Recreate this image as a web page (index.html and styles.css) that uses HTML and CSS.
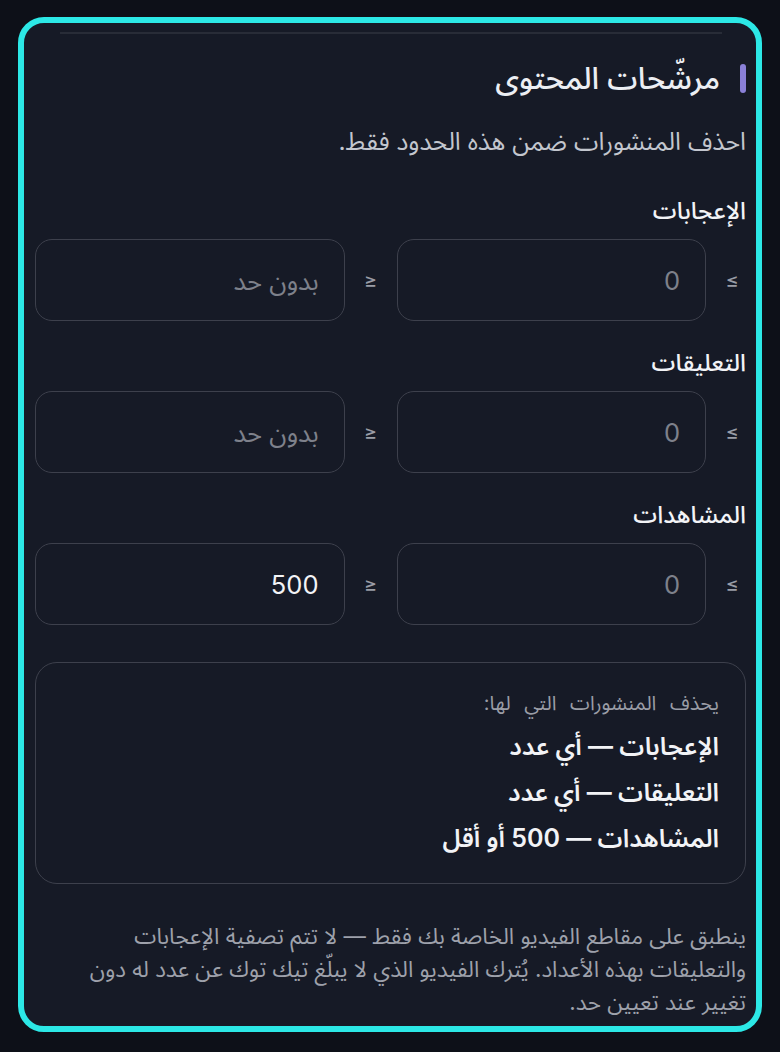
FILE: index.html
```html
<!DOCTYPE html>
<html lang="ar" dir="rtl">
<head>
<meta charset="utf-8">
<title>مرشّحات المحتوى</title>
<link rel="stylesheet" href="styles.css">
</head>
<body>
<div class="card">
  <div class="topline"></div>
  <div class="header">
    <span class="bar"></span>
    <h2 class="title">مرشّحات المحتوى</h2>
  </div>
  <p class="desc">احذف المنشورات ضمن هذه الحدود فقط.</p>

  <div class="group">
    <div class="label">الإعجابات</div>
    <div class="row">
      <span class="sym">≤</span>
      <input class="field" type="text" placeholder="0">
      <span class="sym">≥</span>
      <input class="field" type="text" placeholder="بدون حد">
    </div>
  </div>

  <div class="group">
    <div class="label">التعليقات</div>
    <div class="row">
      <span class="sym">≤</span>
      <input class="field" type="text" placeholder="0">
      <span class="sym">≥</span>
      <input class="field" type="text" placeholder="بدون حد">
    </div>
  </div>

  <div class="group">
    <div class="label">المشاهدات</div>
    <div class="row">
      <span class="sym">≤</span>
      <input class="field" type="text" placeholder="0">
      <span class="sym">≥</span>
      <input class="field" type="text" placeholder="بدون حد" value="500">
    </div>
  </div>

  <div class="summary">
    <div class="summary-head">يحذف المنشورات التي لها:</div>
    <div class="summary-line">الإعجابات — أي عدد</div>
    <div class="summary-line">التعليقات — أي عدد</div>
    <div class="summary-line">المشاهدات — 500 أو أقل</div>
  </div>

  <p class="note">ينطبق على مقاطع الفيديو الخاصة بك فقط — لا تتم تصفية الإعجابات<br>والتعليقات بهذه الأعداد. يُترك الفيديو الذي لا يبلّغ تيك توك عن عدد له دون<br>تغيير عند تعيين حد.</p>
</div>
</body>
</html>
```

FILE: styles.css
```css
* { box-sizing: border-box; }

html, body {
  margin: 0;
  padding: 0;
  background: #0d1018;
}

body {
  font-family: "Inter", "Noto Sans Arabic", "DejaVu Sans", sans-serif;
  color: #eceef3;
  height: 1052px;
  overflow: hidden;
  padding: 17px 18px 0 18px;
}

.card {
  border: 6px solid #2ce8e6;
  border-radius: 26px;
  background: #161a26;
  padding: 0 10px 8px 11px;
}

.topline {
  height: 2px;
  margin: 9px 24px 0 25px;
  background: #282c37;
}

.header {
  display: flex;
  align-items: center;
  gap: 20px;
  margin-top: 24px;
  height: 40px;
}

.bar {
  width: 6px;
  height: 29px;
  border-radius: 3px;
  background: #8a80d8;
}

.title {
  margin: 0;
  font-size: 30.5px;
  font-weight: 500;
  line-height: 40px;
  color: #eceef3;
}

.desc {
  margin: 28px 0 0 0;
  font-size: 24.8px;
  line-height: 30px;
  color: #c3c6ce;
}

.group {
  margin-top: 40px;
}

.group + .group {
  margin-top: 27px;
}

.label {
  font-size: 24px;
  line-height: 30px;
  font-weight: 500;
  color: #f2f3f6;
  margin-bottom: 13px;
}

.row {
  display: flex;
  align-items: center;
  gap: 12px;
}

.sym {
  width: 28px;
  flex: none;
  text-align: center;
  font-size: 20px;
  color: #9a9da6;
  direction: ltr;
  unicode-bidi: isolate;
}

.field {
  flex: 1 1 0;
  min-width: 0;
  height: 82px;
  border: 1.5px solid #3d404c;
  border-radius: 17px;
  background: transparent;
  padding: 0 25px;
  font-family: "Inter", "Noto Sans Arabic", "DejaVu Sans", sans-serif;
  font-size: 25.5px;
  color: #f2f3f6;
  direction: rtl;
  text-align: right;
  outline: none;
}

.field::placeholder {
  color: #7e818b;
}

.summary {
  margin-top: 37px;
  border: 1.5px solid #3d404c;
  border-radius: 22px;
  padding: 27px 26px 22px 26px;
}

.summary-head {
  font-size: 20px;
  line-height: 26px;
  color: #9a9da6;
  word-spacing: 8px;
  margin-bottom: 7px;
}

.summary-line {
  font-size: 25px;
  line-height: 46px;
  font-weight: 600;
  color: #f2f3f6;
}

.note {
  margin: 35px 0 0 0;
  font-size: 22.4px;
  line-height: 33px;
  color: #9ea1ab;
}
```
